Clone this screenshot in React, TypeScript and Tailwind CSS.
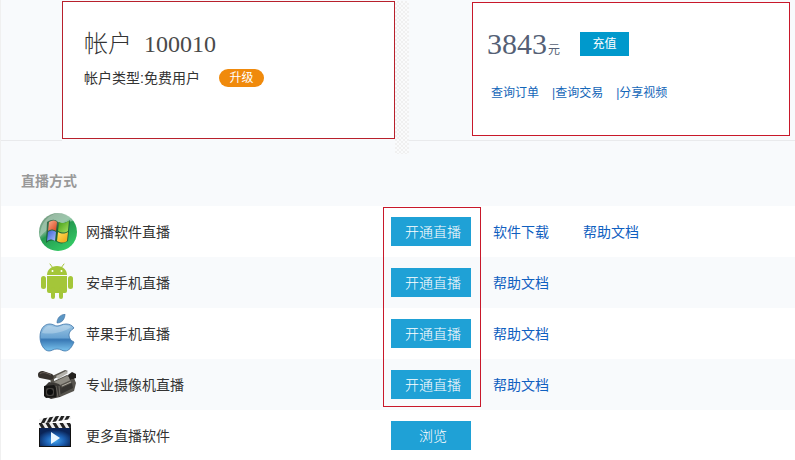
const WindowsIcon = () => (
  <svg viewBox="0 0 40 40" className="size-10" aria-hidden="true">
    <defs>
      <linearGradient id="orb" x1="0.1" y1="0" x2="0.7" y2="1">
        <stop offset="0" stopColor="#7d9d86" />
        <stop offset="0.4" stopColor="#6fae86" />
        <stop offset="0.5" stopColor="#249a50" />
        <stop offset="1" stopColor="#35cc66" />
      </linearGradient>
      <linearGradient id="orbShine" x1="0" y1="0" x2="1" y2="1">
        <stop offset="0" stopColor="#fff" stopOpacity="0.2" />
        <stop offset="1" stopColor="#fff" stopOpacity="0.4" />
      </linearGradient>
      <linearGradient id="red" x1="0" y1="0" x2="1" y2="1">
        <stop offset="0" stopColor="#f9b08e" />
        <stop offset="1" stopColor="#d8431d" />
      </linearGradient>
      <linearGradient id="green" x1="0" y1="0" x2="1" y2="1">
        <stop offset="0" stopColor="#3f9c14" />
        <stop offset="1" stopColor="#a6e060" />
      </linearGradient>
      <linearGradient id="blue" x1="0" y1="0" x2="1" y2="1">
        <stop offset="0" stopColor="#3a5fd0" />
        <stop offset="1" stopColor="#a5bdff" />
      </linearGradient>
      <linearGradient id="yellow" x1="0" y1="0" x2="1" y2="1">
        <stop offset="0" stopColor="#ffe25c" />
        <stop offset="1" stopColor="#eda012" />
      </linearGradient>
    </defs>
    <circle cx="20" cy="20" r="19" fill="url(#orb)" />
    <path d="M2 25C2 8 14 1 22 1c7 0 12 4 14 8C25 10 10 14 2 25z" fill="url(#orbShine)" />
    <path d="M9 10c5-3 8-3 11 0 4 2 7 2 12-2l-2 21c-5 3-8 3-11 1-4-2-7-2-11 1z" fill="#174f2d" opacity="0.75" />
    <path d="M11 10c3-2 6-2 8 0l-1 9c-3-2-5-2-8 0z" fill="url(#red)" />
    <path d="M21 10c4 2 6 1 10-1l-1 10c-3 2-6 2-10 0z" fill="url(#green)" />
    <path d="M10 20c3-2 5-2 8 0l-1 9c-3-2-5-2-8 0z" fill="url(#blue)" />
    <path d="M20 20c4 2 6 2 10 0l-1 9c-3 2-6 2-10 0z" fill="url(#yellow)" />
  </svg>
);

const AndroidIcon = () => (
  <svg viewBox="0 2 40 40" className="size-10" fill="#a4c639" aria-hidden="true">
    <path d="M12 3l3 4M26 3l-3 4" stroke="#a4c639" strokeLinecap="round" />
    <path d="M9 14c0-5 4-9 10-9s10 4 10 9z" />
    <circle cx="14.500" cy="10" r="1" fill="#fff" />
    <circle cx="23.500" cy="10" r="1" fill="#fff" />
    <path d="M9 15h20v15a2 2 0 0 1-2 2H11a2 2 0 0 1-2-2z" />
    <rect x="3" y="15" width="5" height="13" rx="2.500" />
    <rect x="30" y="15" width="5" height="13" rx="2.500" />
    <rect x="13" y="26" width="4" height="12" rx="2" />
    <rect x="21" y="26" width="4" height="12" rx="2" />
  </svg>
);

const AppleIcon = () => (
  <svg viewBox="0 1 40 40" className="size-10" aria-hidden="true">
    <defs>
      <linearGradient id="appleBody" x1="0" y1="0" x2="0" y2="1">
        <stop offset="0" stopColor="#9cc6e4" />
        <stop offset="0.5" stopColor="#6aa3d2" />
        <stop offset="0.58" stopColor="#3878b4" />
        <stop offset="1" stopColor="#7cc4ee" />
      </linearGradient>
    </defs>
    <path d="M19 10c0-5 3-8 8-9 0 5-3 9-8 9z" fill="#5b96c4" stroke="#406f9f" strokeWidth="0.6" />
    <path
      d="M19 13c3 0 5-2 9-2 3 0 6 1 8 4-3 2-5 4-5 7s2 6 5 7c-2 5-5 9-9 9-3 0-4-2-8-2s-5 2-8 2C6 38 2 31 2 24c0-8 4-13 10-13 3 0 5 2 7 2z"
      fill="url(#appleBody)"
      stroke="#3e75a9"
      strokeWidth="0.8"
    />
    <path d="M4 20c2-6 6-8 9-7 5 2 9 1 13-1 3 0 5 1 7 2-5 4-16 8-29 6z" fill="#fff" opacity="0.25" />
  </svg>
);

const CameraIcon = () => (
  <svg viewBox="0 0 40 40" className="size-10" aria-hidden="true">
    <path d="M12 12l15-7 3 1-14 8v6h-3z" fill="#5a5750" />
    <path d="M18 11l10-5 2 2-10 6z" fill="#b5b3ad" />
    <path d="M0 10c0-3 2-4 5-4l9 3c2 1 2 3 1 5l-3 1-10-2c-1 0-2-1-2-3z" fill="#37322e" />
    <path d="M2 9c2-2 5-2 11 1" fill="none" stroke="#69605a" strokeWidth="1" />
    <path d="M14 17l15-7 7 3 2 5-2 8-14 6-8-3z" fill="#56534d" />
    <path d="M16 17l13-6 6 3-13 6z" fill="#8e8b83" />
    <path d="M30 10l4-3 4 2v4l-6 2z" fill="#24211f" />
    <path d="M23 23l11-5 1 5-12 6z" fill="#353330" />
    <path d="M24 21l9-4" stroke="#b2ada3" strokeWidth="1" />
    <path d="M7 21l4-4 10 2 3 4-2 9-9 2-6-3z" fill="#3b3835" />
    <path d="M6 21l10-1 3 3-1 9-10 1-2-2z" fill="#171615" />
    <rect x="8" y="23" width="8" height="8" rx="2" fill="#44413e" />
    <circle cx="12" cy="27" r="3" fill="#0c0c0d" />
    <path d="M18 21l2 11M21 21l1 10" stroke="#75716a" strokeWidth="0.8" />
  </svg>
);

const ClapperIcon = () => (
  <svg viewBox="0 3 40 40" className="size-10" aria-hidden="true">
    <defs>
      <radialGradient id="screen" cx="0.5" cy="0.7" r="0.6">
        <stop offset="0" stopColor="#45a8ef" />
        <stop offset="0.5" stopColor="#1d62b5" />
        <stop offset="1" stopColor="#0a2457" />
      </radialGradient>
      <clipPath id="topBar">
        <path d="M1 6l31-5 1 5L2 11z" />
      </clipPath>
      <clipPath id="lowBar">
        <path d="M1 10h32v5H1z" />
      </clipPath>
    </defs>
    <path d="M1 6l31-5 1 5L2 11z" fill="#efefef" />
    <path d="M3 13l6-11M9 12l6-11M15 11l6-11M21 10l6-11M27 9l6-11" stroke="#222" strokeWidth="3" clipPath="url(#topBar)" />
    <path d="M1 10h32v5H1z" fill="#ececec" />
    <path d="M1 8l6 10M8 8l6 10M15 8l6 10M22 8l6 10M29 8l6 10" stroke="#222" strokeWidth="3" clipPath="url(#lowBar)" />
    <rect x="1" y="15" width="32" height="19" fill="#111" />
    <rect x="2" y="15" width="30" height="18" fill="url(#screen)" />
    <path d="M13 19l9 6-9 6z" fill="#e9f6ff" />
  </svg>
);

const methods = [
  { name: "网播软件直播", icon: <WindowsIcon />, action: "开通直播", links: ["软件下载", "帮助文档"] },
  { name: "安卓手机直播", icon: <AndroidIcon />, action: "开通直播", links: ["帮助文档"] },
  { name: "苹果手机直播", icon: <AppleIcon />, action: "开通直播", links: ["帮助文档"] },
  { name: "专业摄像机直播", icon: <CameraIcon />, action: "开通直播", links: ["帮助文档"] },
  { name: "更多直播软件", icon: <ClapperIcon />, action: "浏览", links: [] },
];

const AccountPanel = () => (
  <section className="w-[333px] h-[138px] bg-white border border-[#b8202c] pt-7 pl-[21px]">
    <h1 className="flex gap-3 text-2xl leading-7 font-light text-[#333]">
      帐户 <span className="font-['Liberation_Serif',serif] text-[#4a4a4a]">100010</span>
    </h1>
    <div className="flex items-center gap-[19px] mt-2">
      <p className="text-sm leading-6 text-[#333]">帐户类型:免费用户</p>
      <button type="button" className="w-[45px] h-[18px] rounded-full bg-[#f08a0c] text-xs text-white">
        升级
      </button>
    </div>
  </section>
);

const BalancePanel = () => (
  <section className="w-[318px] h-[134px] mt-px bg-white border border-[#c8182a] pt-[25px] pl-3.5">
    <div className="flex items-center">
      <p className="flex items-baseline gap-px text-[#555f75]">
        <span className="font-['Liberation_Serif',serif] text-3xl leading-8">3843</span>
        <span className="text-xs">元</span>
      </p>
      <button type="button" className="ml-5 w-[49px] h-6 bg-[#0099cc] text-xs text-white">
        充值
      </button>
    </div>
    <nav className="flex gap-[13px] mt-[25px] pl-1 text-xs text-[#1366b8]">
      <a href="#orders">查询订单</a>
      <a href="#trades">|查询交易</a>
      <a href="#videos">|分享视频</a>
    </nav>
  </section>
);

const App = () => {
  return (
    <main className="min-h-screen bg-[#f8fafc] border-l border-[#f0f0f0] font-['Liberation_Sans','Noto_Sans_CJK_SC',sans-serif]">
      <div className="flex pt-px">
        <div className="flex">
          <div className="w-[61px] h-[140px] border-b border-[#e9eaec]"></div>
          <AccountPanel />
          <div className="w-3.5 h-[153px] bg-[repeating-conic-gradient(#f0f0f0_0_25%,#fafbfc_0_50%)] bg-[length:4px_4px]"></div>
        </div>
        <div className="grow h-[140px] pl-[63px] border-b border-[#e9eaec]">
          <BalancePanel />
        </div>
      </div>

      <h2 className="pt-[15px] pb-[13px] pl-5 text-sm leading-6 font-bold text-[#999]">直播方式</h2>

      <div className="relative">
        <table className="w-full table-fixed text-sm text-[#333]">
          <tbody>
            {methods.map((method) => (
              <tr key={method.name} className="h-[51px] odd:bg-white even:bg-[#f8fafc]">
                <th scope="row" className="w-[390px] p-0 pl-[37px] font-normal text-left">
                  <div className="flex items-center gap-2">
                    {method.icon}
                    {method.name}
                  </div>
                </th>
                <td className="w-20 p-0">
                  <button type="button" className="block w-20 h-[29px] pl-1 bg-[#1fa1d6] font-light text-white">
                    {method.action}
                  </button>
                </td>
                <td className="p-0 pl-[22px]">
                  <div className="flex gap-[34px] text-[#1060c0]">
                    {method.links.map((link) => (
                      <a key={link} href="#docs">
                        {link}
                      </a>
                    ))}
                  </div>
                </td>
              </tr>
            ))}
          </tbody>
        </table>
        {/* outline around the four start buttons */}
        <div className="absolute top-px left-[382px] w-[98px] h-[200px] border border-[#c8182a] pointer-events-none"></div>
      </div>
    </main>
  );
};

export default App;
